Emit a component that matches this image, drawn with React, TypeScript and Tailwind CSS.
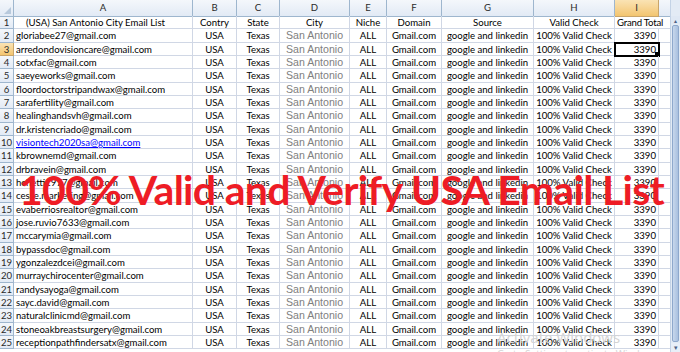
import React from "react";

const EMAILS = [
  "gloriabee27@gmail.com",
  "arredondovisioncare@gmail.com",
  "sotxfac@gmail.com",
  "saeyeworks@gmail.com",
  "floordoctorstripandwax@gmail.com",
  "sarafertility@gmail.com",
  "healinghandsvh@gmail.com",
  "dr.kristencriado@gmail.com",
  "visiontech2020sa@gmail.com",
  "kbrownemd@gmail.com",
  "drbravein@gmail.com",
  "hchetti1977@gmail.com",
  "cesse.marketing@gmail.com",
  "evaberriosrealtor@gmail.com",
  "jose.ruvio7633@gmail.com",
  "mccarymia@gmail.com",
  "bypassdoc@gmail.com",
  "ygonzalezdcei@gmail.com",
  "murraychirocenter@gmail.com",
  "randysayoga@gmail.com",
  "sayc.david@gmail.com",
  "naturalclinicmd@gmail.com",
  "stoneoakbreastsurgery@gmail.com",
  "receptionpathfindersatx@gmail.com",
];

const COLS = ["A", "B", "C", "D", "E", "F", "G", "H", "I", ""];
const HEAD = ["Contry", "State", "City", "Niche", "Domain", "Source", "Valid Check"];

const grid = "grid grid-cols-[14px_179px_44px_43px_70px_37px_55px_92px_81px_44px_12px]";
const cell = "border-r border-b border-[#d0d7e5] h-[13.33px] leading-[13px] overflow-hidden whitespace-nowrap";
const hdr = "border-r border-b border-[#9eb6ce] bg-gradient-to-b from-[#f4f7fb] to-[#e2eaf5] text-[#2a2a2a] text-center";
const sel = "border-r border-b border-[#c9a56a] bg-gradient-to-b from-[#fae3b4] to-[#f3c56f] text-[#2a2a2a] text-center";

export default function App() {
  return (
    <div className="flex w-[680px] h-[352px] overflow-hidden bg-white font-['Lato',sans-serif] text-[9.6px] text-black">
      <div className="relative flex-1 overflow-hidden">
        {/* column header row */}
        <div className={`${grid} h-[16px]`}>
          <div className={`${hdr} relative`}>
            <div className="absolute right-[2px] bottom-[2px] w-0 h-0 border-l-[7px] border-l-transparent border-b-[7px] border-b-[#b8c9dc]" />
          </div>
          {COLS.map((c, i) => (
            <div key={i} className={`${c === "I" ? sel : hdr} leading-[16px]`}>{c}</div>
          ))}
        </div>

        {/* row 1 */}
        <div className={grid}>
          <div className={`${hdr} h-[13.33px] leading-[13px]`}>1</div>
          <div className={`${cell} pl-[12px]`}>(USA) San Antonio City Email List</div>
          {HEAD.map((h, i) => (
            <div key={i} className={`${cell} text-center`}>{h}</div>
          ))}
          <div className="border-b border-[#d0d7e5] h-[13.33px] leading-[13px] whitespace-nowrap pl-[2px] tracking-[-0.2px]">Grand Total</div>
          <div className={cell} />
        </div>

        {EMAILS.map((email, i) => {
          const n = i + 2;
          return (
            <div key={email} className={grid}>
              <div className={`${n === 3 ? sel : hdr} h-[13.33px] leading-[13px]`}>{n}</div>
              <div className={`${cell} pl-[2px]`}>
                {n === 10 ? <span className="text-[#0000ff] underline">{email}</span> : email}
              </div>
              <div className={`${cell} text-center`}>USA</div>
              <div className={`${cell} text-center`}>Texas</div>
              <div className={`${cell} text-center font-['Liberation_Sans',sans-serif] text-[10.6px] text-[#808080]`}>San Antonio</div>
              <div className={`${cell} text-center`}>ALL</div>
              <div className={`${cell} text-center`}>Gmail.com</div>
              <div className={`${cell} text-center`}>google and linkedin</div>
              <div className={`${cell} text-center`}>100% Valid Check</div>
              <div className={`${cell} relative text-right pr-[2px] ${n === 3 ? "outline-2 outline-black -outline-offset-1" : ""}`}>
                3390
                {n === 3 && <span className="absolute right-[-1px] bottom-[-1px] w-[4px] h-[4px] bg-black" />}
              </div>
              <div className={cell} />
            </div>
          );
        })}

        {/* overlay banner */}
        <div className="absolute left-[19px] top-[169px] font-['Lato',sans-serif] font-bold text-[41px] leading-[42px] tracking-[-0.7px] text-[#ee1c25] whitespace-nowrap pointer-events-none">
          100% Valid and Verify USA Email List
        </div>

        {/* windows watermark */}
        <div className="absolute left-[497px] top-[330px] font-['Open_Sans',sans-serif] text-[#d4d4d4] pointer-events-none leading-none">
          <div className="text-[15px]">Activate Windows</div>
          <div className="text-[10px] mt-[4px]">Go to Settings to activate Windows.</div>
        </div>
      </div>

      {/* vertical scrollbar */}
      <div className="w-[10px] flex flex-col bg-[#e3ebf5] border-l border-[#c4d3e6]">
        <div className="h-[16px]" />
        <div className="h-[8px] flex items-center justify-center text-[6px] text-[#4d6185] bg-[#dfe8f4]">▴</div>
        <div className="flex-1 mx-[1px] my-[1px] rounded-[2px] bg-gradient-to-r from-[#c7d7ec] to-[#a9c0df] border border-[#8ea8cc]" />
        <div className="h-[9px] flex items-center justify-center text-[7px] text-[#4d6185] bg-[#e8eff8]">▾</div>
      </div>
    </div>
  );
}
